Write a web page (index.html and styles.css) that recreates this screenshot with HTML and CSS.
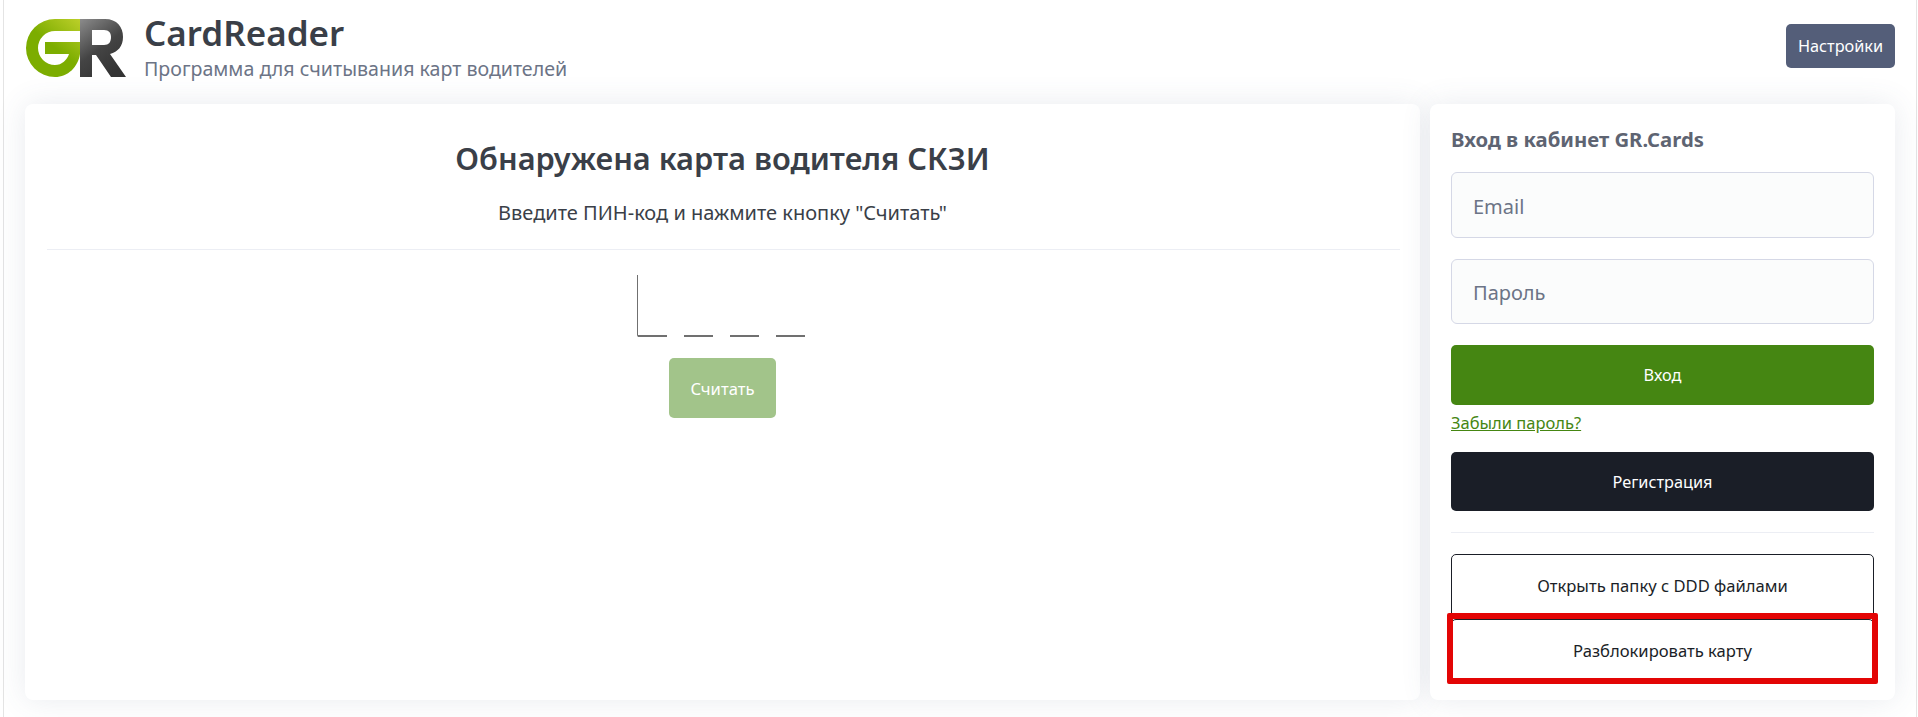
FILE: index.html
```html
<!DOCTYPE html>
<html lang="ru">
<head>
    <meta charset="UTF-8">
    <title>CardReader</title>
    <link rel="stylesheet" href="styles.css">
</head>
<body>

<div class="app">
    <header class="topbar">
        <div class="brand">
            <svg class="logo" viewBox="24 17 104 62" width="104" height="62">
                <defs>
                    <linearGradient id="gGreen" gradientUnits="userSpaceOnUse" x1="40" y1="70" x2="82" y2="18">
                        <stop offset="0.4" stop-color="#7cad00"/>
                        <stop offset="1" stop-color="#c0d12c"/>
                    </linearGradient>
                    <linearGradient id="gGray" gradientUnits="userSpaceOnUse" x1="80" y1="20" x2="118" y2="70">
                        <stop offset="0" stop-color="#8a8a8a"/>
                        <stop offset="0.55" stop-color="#444444"/>
                        <stop offset="1" stop-color="#333333"/>
                    </linearGradient>
                </defs>
                <path fill="url(#gGreen)" d="M80 19H55A29 29 0 0 0 55 77C68 77 78 67 80 54V42H45V54H69C67 60 62 65 55 65A17 17 0 0 1 55 31H80Z"/>
                <path fill="url(#gGray)" fill-rule="evenodd" d="M80 19H105C117 19 123 27 123 37C123 46 118 52 110 54L126 77H111L96 55H92V77H80ZM92 30V45H104C109 45 111 42 111 37C111 33 109 30 104 30Z"/>
            </svg>
            <div class="brand-text">
                <h1>CardReader</h1>
                <p>Программа для считывания карт водителей</p>
            </div>
        </div>
        <button class="btn btn-settings">Настройки</button>
    </header>

    <main class="columns">
        <section class="card card-main">
            <h2>Обнаружена карта водителя СКЗИ</h2>
            <p class="hint">Введите ПИН-код и нажмите кнопку "Считать"</p>
            <hr>
            <div class="pin">
                <span></span><span></span><span></span><span></span>
            </div>
            <button class="btn btn-read">Считать</button>
        </section>

        <aside class="card card-side">
            <h3>Вход в кабинет GR.Cards</h3>
            <input class="field" type="text" placeholder="Email">
            <input class="field field-pass" type="password" placeholder="Пароль">
            <button class="btn btn-login">Вход</button>
            <a class="forgot" href="#">Забыли пароль?</a>
            <button class="btn btn-register">Регистрация</button>
            <hr>
            <button class="btn btn-outline">Открыть папку с DDD файлами</button>
            <div class="marked">
                <button class="btn btn-outline">Разблокировать карту</button>
                <div class="red-frame"></div>
            </div>
        </aside>
    </main>
</div>

</body>
</html>
```

FILE: styles.css
```css
html, body {
    margin: 0;
    height: 100%;
}
body {
    font-family: "Noto Sans", "Open Sans", sans-serif;
    background-color: #ffffff;
    overflow: hidden;
}
.app {
    height: 717px;
    margin: 0 1px 0 3px;
    border-left: 1px solid #e4e4e4;
    border-right: 1px solid #e4e4e4;
    box-sizing: border-box;
    padding: 0 21px 17px 21px;
    display: flex;
    flex-direction: column;
}

.topbar {
    height: 104px;
    display: flex;
    justify-content: space-between;
    align-items: flex-start;
}
.brand {
    display: flex;
    padding-top: 11px;
}
.logo {
    margin-top: 6px;
    margin-left: -1px;
    margin-right: 16px;
}
.brand-text h1 {
    margin: 0;
    font-size: 35px;
    line-height: 44px;
    font-weight: 600;
    color: #3a3f48;
}
.brand-text p {
    margin: 0;
    font-size: 19.6px;
    line-height: 28px;
    color: #6c7486;
}

.btn {
    font-family: inherit;
    border: none;
    border-radius: 5px;
    cursor: pointer;
    font-size: 16.3px;
}
.btn-settings {
    margin-top: 24px;
    width: 109px;
    height: 44px;
    background-color: #545e79;
    color: white;
}

.columns {
    flex: 1;
    display: flex;
    gap: 10px;
}
.card {
    background-color: white;
    border-radius: 8px;
    box-shadow: 0 0 30px rgba(76, 87, 125, 0.12);
    box-sizing: border-box;
}
.card-main {
    flex: 1;
    padding: 0 22px;
    display: flex;
    flex-direction: column;
    align-items: center;
}
.card-main h2 {
    margin: 32px 0 0 0;
    font-size: 30.8px;
    line-height: 44px;
    font-weight: 600;
    color: #3a3f48;
}
.hint {
    margin: 19px 0 0 0;
    font-size: 20px;
    line-height: 28px;
    color: #3a3f48;
}
hr {
    width: 100%;
    margin: 0;
    border: none;
    border-top: 1px solid #eceef4;
}
.card-main hr {
    width: calc(100% + 2px);
    margin: 22px -2px 0 0;
}
.pin {
    margin: 25px 3px 0 0;
    width: 168px;
    height: 62px;
    box-sizing: border-box;
    border-left: 1px solid #707070;
    border-bottom-left-radius: 2px;
    display: flex;
    align-items: flex-end;
    gap: 17px;
}
.pin span {
    width: 29px;
    height: 2px;
    background-color: #707070;
}
.btn-read {
    margin-top: 21px;
    width: 107px;
    height: 60px;
    background-color: #a2c48a;
    color: white;
    font-size: 16.6px;
}

.card-side {
    width: 465px;
    padding: 0 21px;
    display: flex;
    flex-direction: column;
}
.card-side h3 {
    margin: 21px 0 0 0;
    font-size: 20.3px;
    line-height: 28px;
    font-weight: 700;
    color: #5e6472;
}
.field {
    height: 66px;
    margin-top: 19px;
    padding: 2px 21px 0 21px;
    box-sizing: border-box;
    font-family: inherit;
    font-size: 20px;
    background-color: #fbfcfc;
    border: 1px solid #d5d8e6;
    border-radius: 6px;
}
.field-pass {
    height: 65px;
    margin-top: 21px;
}
.field::placeholder {
    color: #6c7486;
    opacity: 1;
}
.btn-login {
    margin-top: 21px;
    height: 60px;
    background-color: #458612;
    color: white;
}
.forgot {
    margin-top: 5px;
    font-size: 16.5px;
    line-height: 25px;
    color: #458612;
}
.btn-register {
    margin-top: 17px;
    height: 59px;
    background-color: #1a1e27;
    color: white;
}
.card-side hr {
    margin-top: 21px;
}
.btn-outline {
    width: 100%;
    height: 65px;
    padding: 0 0 2px 0;
    background-color: white;
    color: #1a1e27;
    border: 1px solid #1a1e27;
    display: block;
    font-size: 16.6px;
}
.card-side hr + .btn-outline {
    margin-top: 21px;
}
.marked {
    position: relative;
}
.red-frame {
    position: absolute;
    left: -4px;
    right: -4px;
    top: -6px;
    bottom: 0;
    border: 6px solid #e30505;
    border-radius: 2px;
}
```
